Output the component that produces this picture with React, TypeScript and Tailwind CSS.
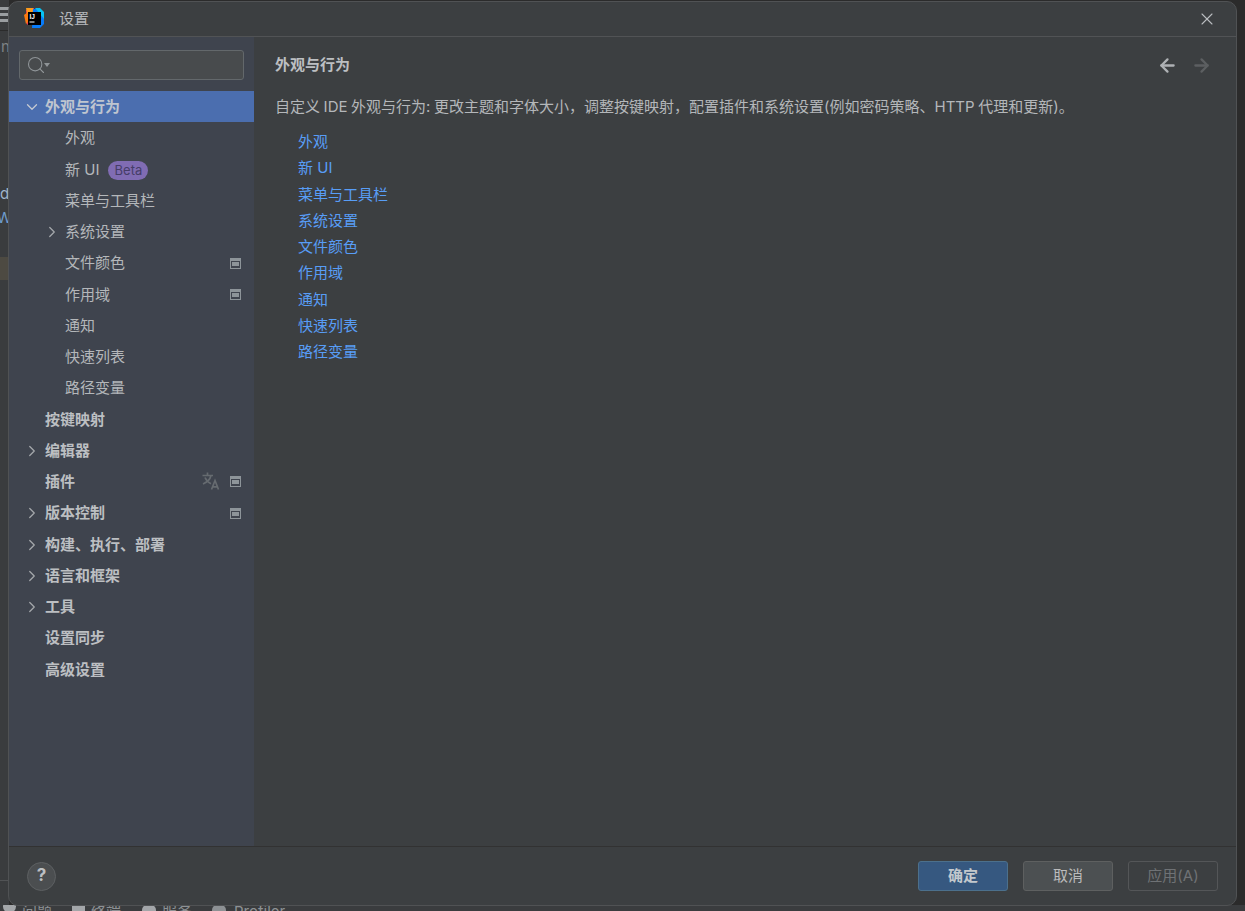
import { ChevronDown, ChevronRight, X, ArrowLeft, ArrowRight, Search } from "lucide-react";

const FONT = "font-['Inter','Noto_Sans_CJK_SC',sans-serif]";

// small "project level" marker next to a settings row
function ScopeIcon() {
  return (
    <svg width="11" height="11" viewBox="0 0 11 11" className="shrink-0 mt-[-1px]">
      <rect x="0" y="0" width="11" height="11" fill="#8d9499" />
      <rect x="1" y="3" width="9" height="7" fill="#3f444e" />
      <rect x="2" y="4" width="7" height="4" fill="#8d9499" />
    </svg>
  );
}

function TranslateIcon() {
  return (
    <svg width="18" height="18" viewBox="0 0 18 18" fill="none" stroke="#666b70" strokeWidth="1.7" className="shrink-0 mt-[-2px]">
      <path d="M0.500 3.500h10.500M5.500 0.500v3M9 3.500c-.8 3.500-3.500 6.500-8 8.500M3 5.500c1.200 2.800 3.200 5 6 6.200" />
      <path d="M9.500 17.500l3.500-9 3.500 9M10.800 14.800h4.500" />
    </svg>
  );
}

function IdeaLogo() {
  return (
    <svg width="20" height="20" viewBox="0 0 20 20" className="shrink-0 mb-[2px]">
      <path d="M2 2l8-2 1 10-8 7z" fill="#fe315d" />
      <path d="M0 7l4-3 1 9-3 3z" fill="#f97a12" />
      <path d="M2 0l7 0 2 5H3z" fill="#fd9c1b" />
      <path d="M9 1h7l4 4v11l-4 4H8z" fill="#087cfa" />
      <path d="M11 0h5l4 4v7z" fill="#07c3f2" />
      <rect x="4" y="4" width="13" height="13" fill="#000" />
      <text x="5.500" y="10.500" fontSize="6.500" fontWeight="700" fill="#fff" fontFamily="Liberation Sans">IJ</text>
      <rect x="5.500" y="13.500" width="5" height="1" fill="#fff" />
    </svg>
  );
}

type Row = { label: string; child?: boolean; arrow?: boolean; scope?: boolean; beta?: boolean; translate?: boolean };

const rows: Row[] = [
  { label: "外观", child: true },
  { label: "新 UI", child: true, beta: true },
  { label: "菜单与工具栏", child: true },
  { label: "系统设置", child: true, arrow: true },
  { label: "文件颜色", child: true, scope: true },
  { label: "作用域", child: true, scope: true },
  { label: "通知", child: true },
  { label: "快速列表", child: true },
  { label: "路径变量", child: true },
  { label: "按键映射" },
  { label: "编辑器", arrow: true },
  { label: "插件", translate: true, scope: true },
  { label: "版本控制", arrow: true, scope: true },
  { label: "构建、执行、部署", arrow: true },
  { label: "语言和框架", arrow: true },
  { label: "工具", arrow: true },
  { label: "设置同步" },
  { label: "高级设置" },
];

const links = ["外观", "新 UI", "菜单与工具栏", "系统设置", "文件颜色", "作用域", "通知", "快速列表", "路径变量"];

function TreeRow({ row }: { row: Row }) {
  return (
    <div className={`h-[31.25px] flex items-center pr-[13px] ${row.child ? "pl-[56px]" : "pl-[36px]"}`}>
      <div className={`relative flex-1 flex items-center ${row.child ? "text-[#b4b7ba]" : "text-[#bcbfc2] font-bold"}`}>
        {row.arrow && (
          <ChevronRight size={18} strokeWidth={1.7} className="absolute left-[-22px] top-[2px] text-[#a4a7aa]" />
        )}
        <span>{row.label}</span>
        {row.beta && (
          <span className="ml-[9px] mt-[1px] h-[19px] w-[40px] rounded-full bg-[#806cb3] text-[#463d68] text-[13px] font-normal flex items-center justify-center">
            Beta
          </span>
        )}
        <div className="ml-auto flex items-center gap-[10px]">
          {row.translate && <TranslateIcon />}
          {row.scope && <ScopeIcon />}
        </div>
      </div>
    </div>
  );
}

export default function App() {
  return (
    <div className={`relative w-[1245px] h-[911px] overflow-hidden bg-[#2b2b2b] text-[15px] ${FONT}`}>
      {/* IDE peeking out behind the dialog */}
      <div className="absolute left-0 top-0 w-[9px] h-[911px] bg-[#3a3c3e]" />
      <div className="absolute left-0 top-[5px] w-[9px] h-[23px] flex flex-col gap-[3px] pt-[2px]">
        <div className="h-[3px] bg-[#9a9ea1]" />
        <div className="h-[3px] bg-[#9a9ea1]" />
        <div className="h-[3px] bg-[#9a9ea1]" />
      </div>
      <div className="absolute left-0 top-[30px] w-[9px] h-[1px] bg-[#2b2b2b]" />
      <span className="absolute left-[1px] top-[36px] text-[#7f8386]">n</span>
      <span className="absolute left-0 top-[184px] text-[#9fb4cc] leading-[20px]">d</span>
      <span className="absolute left-[-3px] top-[208px] text-[#6f9ccc] leading-[20px]">W</span>
      <div className="absolute left-0 top-[257px] w-[9px] h-[23px] bg-[#4d4a42]" />
      <div className="absolute left-0 top-[880px] w-[9px] h-[1px] bg-[#515355]" />
      <div className="absolute left-0 top-[905px] w-[1245px] h-[6px] bg-[#3a3c3e] overflow-hidden text-[#8d9194] text-[15px] leading-[20px]">
        <span className="absolute left-[22px] top-[-3px]">问题</span>
        <span className="absolute left-[91px] top-[-3px]">终端</span>
        <span className="absolute left-[162px] top-[-3px]">服务</span>
        <span className="absolute left-[234px] top-[-3px]">Profiler</span>
        <div className="absolute left-[3px] top-[-5px] w-[13px] h-[13px] rounded-full bg-[#a3a6a9]" />
        <div className="absolute left-[72px] top-[0px] w-[13px] h-[11px] bg-[#a3a6a9]" />
        <div className="absolute left-[142px] top-[0px] w-[14px] h-[11px] rounded-[5px] bg-[#a3a6a9]" />
        <div className="absolute left-[212px] top-[0px] w-[14px] h-[11px] rounded-[5px] bg-[#8d9194]" />
      </div>
      <div className="absolute left-[1236px] top-0 w-[9px] h-[905px] bg-[#2b2b2b]" />

      {/* Settings dialog */}
      <div className="absolute left-[8px] top-[1px] w-[1229px] h-[905px] rounded-[10px] border border-[#505254] bg-[#3c3f41] flex flex-col overflow-hidden">
        <div className="h-[35px] shrink-0 border-b border-[#515355] flex items-center pl-[15px] pr-[19px]">
          <IdeaLogo />
          <span className="ml-[15px] mt-[1px] text-[15px] text-[#b4b7ba]">设置</span>
          <X size={20} strokeWidth={1.3} className="ml-auto text-[#b9bcbf]" />
        </div>

        <div className="flex-1 flex min-h-0">
          <div className="w-[245px] shrink-0 bg-[#3f444e]">
            <div className="h-[54px] px-[10px] pt-[13px]">
              <div className="h-[30px] rounded-[3px] border border-[#63686b] bg-[#484b4d] flex items-center pl-[6px]">
                <Search size={20} strokeWidth={1.3} className="text-[#8f9497]" />
                <span className="w-0 h-0 border-l-[3px] border-r-[3px] border-t-[4px] border-l-transparent border-r-transparent border-t-[#8f9497] ml-[-2px]" />
              </div>
            </div>
            <div className="h-[31px] pt-[1px] bg-[#4b6eaf] relative flex items-center pl-[36px] font-bold text-[#bfc5cf]">
              <ChevronDown size={18} strokeWidth={1.7} className="absolute left-[14px] top-[7px] text-[#c5cad2]" />
              外观与行为
            </div>
            <div className="mt-[1.1px]">
              {rows.map((row) => (
                <TreeRow key={row.label} row={row} />
              ))}
            </div>
          </div>

          <div className="flex-1 min-w-0 pl-[21px] pr-[24px] text-[#b4b7ba]">
            <div className="h-[56px] flex items-center pt-[1px]">
              <span className="font-bold text-[#bcbfc2]">外观与行为</span>
              <div className="ml-auto flex items-center gap-[13px]">
                <ArrowLeft size={21} strokeWidth={2.6} className="text-[#aeb1b4]" />
                <ArrowRight size={21} strokeWidth={2.6} className="text-[#5c5f61]" />
              </div>
            </div>
            <div className="h-[21px] leading-[21px] mt-[3px] whitespace-nowrap [word-spacing:-0.6px]">
              自定义 IDE 外观与行为: 更改主题和字体大小，调整按键映射，配置插件和系统设置(例如密码策略、HTTP 代理和更新)。
            </div>
            <div className="pl-[23px] pt-[12.3px] flex flex-col text-[#589df6]">
              {links.map((link) => (
                <div key={link} className="h-[26.25px] flex items-center">{link}</div>
              ))}
            </div>
          </div>
        </div>

        <div className="h-[59px] shrink-0 border-t border-[#323232] flex items-center pl-[18px] pr-[18px]">
          <div className="w-[29px] h-[29px] rounded-full border border-[#5d6062] bg-[#4b4e50] text-[#bcbfc2] font-bold text-[17px] flex items-center justify-center">
            ?
          </div>
          <div className="ml-auto flex items-center gap-[15px]">
            <div className="w-[90px] h-[30px] rounded-[3px] border border-[#4c708c] bg-[#365880] text-[#c3c8cd] font-bold flex items-center justify-center">
              确定
            </div>
            <div className="w-[90px] h-[30px] rounded-[3px] border border-[#5e6060] bg-[#4c5052] text-[#bbbbbb] flex items-center justify-center">
              取消
            </div>
            <div className="w-[90px] h-[30px] rounded-[3px] border border-[#545658] text-[#6f7275] flex items-center justify-center">
              应用(A)
            </div>
          </div>
        </div>
      </div>
    </div>
  );
}
